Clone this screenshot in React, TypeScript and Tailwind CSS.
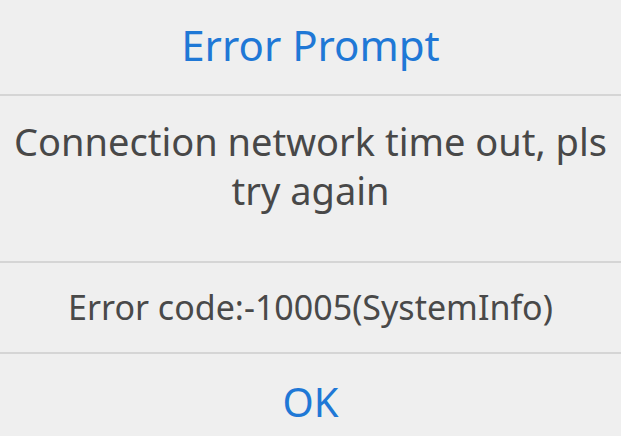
export default function App() {
  return (
    <div
      className="w-[621px] h-[436px] bg-[#efefef] flex flex-col overflow-hidden"
      style={{ fontFamily: '"Noto Sans", Roboto, sans-serif' }}
    >
      <div className="h-[94px] pb-[6px] flex items-center justify-center text-[42px] text-[#1f78d6]">
        Error Prompt
      </div>
      <div className="h-[2px] bg-[#d5d5d5]" />
      <div className="h-[165px] pb-[26px] flex items-center justify-center px-2 text-center text-[38px] leading-[49px] text-[#484848]">
        Connection network time out, pls try again
      </div>
      <div className="h-[2px] bg-[#d5d5d5]" />
      <div className="h-[89px] flex items-center justify-center text-[34px] text-[#494949]">
        Error code:-10005(SystemInfo)
      </div>
      <div className="h-[2px] bg-[#d5d5d5]" />
      <div className="flex-1 pt-[14px] flex items-center justify-center text-[40px] text-[#1f78d6]">
        OK
      </div>
    </div>
  )
}
